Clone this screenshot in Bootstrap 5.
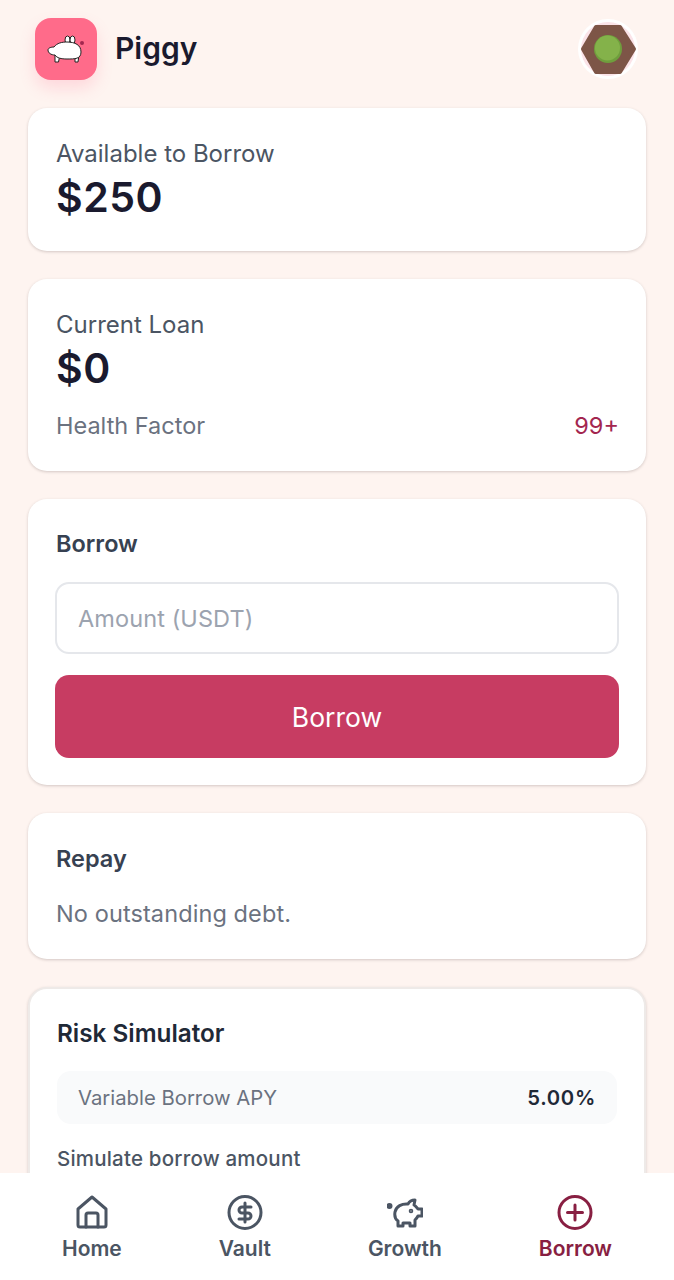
<!DOCTYPE html>
<html lang="en">
<head>
    <meta charset="UTF-8">
    <meta name="viewport" content="width=device-width, initial-scale=1.0">
    <title>Piggy</title>
    <link href="https://cdn.jsdelivr.net/npm/bootstrap@5.3.0/dist/css/bootstrap.min.css" rel="stylesheet">
    <style>
        html, body { height: 100%; }
        body { background: #fef4f0; font-family: Inter, "Liberation Sans", sans-serif; overflow: hidden; color: #1a1a2e; }
        .app-page { height: 1280px; overflow: hidden; padding: 0 28px; }
        .app-head { height: 108px; padding: 0 8px 10px 7px; }
        .logo-box { width: 62px; height: 62px; border-radius: 16px; background: #ff6b8a; box-shadow: 0 8px 16px rgba(255, 107, 138, .2); }
        .brand-gap { gap: 18px; }
        .brand-name { font-size: 30px; font-weight: 600; line-height: 1; color: #1a1a2e; margin-top: -3px; }
        .info-card { border: 0; border-radius: 19px; background: #fff; box-shadow: 0 1px 3px rgba(60, 40, 40, .22); margin-bottom: 28px; padding: 28px 27px; }
        .card-label { font-size: 24px; line-height: 35px; color: #4b5563; padding-left: 1px; }
        .card-amount { font-size: 41px; line-height: 52px; font-weight: 600; color: #1a1a2e; letter-spacing: .5px; padding-left: 1px; }
        .health-row { margin-top: 15px; font-size: 23.5px; line-height: 34px; color: #6b7280; padding-left: 1px; }
        .health-val { color: #a3264f; }
        .section-title { font-size: 23.5px; line-height: 34px; font-weight: 600; color: #374151; padding-left: 1px; }
        .amount-input.form-control { height: 72px; margin-top: 21px; border: 2px solid #e5e7eb; border-radius: 14px; padding: 0 21px; font-size: 23.5px; letter-spacing: .1px; color: #1a1a2e; }
        .amount-input.form-control::placeholder { color: #9ca3af; }
        .borrow-btn.btn { display: block; width: 100%; height: 83px; margin: 21px 0 -1px; padding-top: 9px; border: 0; border-radius: 14px; background: #c73c62; color: #fff; font-size: 26.5px; }
        .repay-card { padding-top: 29px; }
        .repay-note { margin-top: 21px; font-size: 23.5px; line-height: 34px; letter-spacing: .1px; color: #6b7280; padding-left: 1px; }
        .risk-card { border: 2px solid #eeeae8; padding: 27px 27px 0; height: 300px; margin-bottom: 0; }
        .risk-title { font-size: 24.3px; line-height: 34px; font-weight: 600; color: #1f2937; }
        .apy-row { height: 53px; margin-top: 21px; padding: 2px 21px 0; border-radius: 14px; background: #f9fafb; font-size: 20.3px; color: #6b7280; }
        .apy-val { font-weight: 600; color: #1f2937; letter-spacing: .7px; }
        .sim-label { margin-top: 20px; font-size: 20.5px; line-height: 30px; font-weight: 500; letter-spacing: .2px; color: #4b5563; }
        .tab-bar { height: 107px; background: #fff; z-index: 10; padding: 0 62px; }
        .tab-item { padding-top: 22px; color: #4b5563; font-size: 21px; font-weight: 600; line-height: 28px; text-decoration: none; }
        .tab-item svg { display: block; width: 36px; height: 36px; margin-bottom: 4px; }
        .tab-item.tab-on { color: #881f42; }
    </style>
</head>
<body>
    <div class="app-page">
        <header class="app-head d-flex align-items-center justify-content-between">
            <div class="d-flex align-items-center brand-gap">
                <div class="logo-box d-flex align-items-center justify-content-center">
                    <svg width="38" height="28" viewBox="0 0 38 28">
                        <path d="M8 20v7h3.500l1-5zM28 21v6h3l1-7z" fill="#fff" stroke="#222"/>
                        <ellipse cx="20.500" cy="5" rx="2.500" ry="4" fill="#fff" stroke="#222"/>
                        <ellipse cx="25.500" cy="5" rx="2.500" ry="4" fill="#fff" stroke="#222"/>
                        <path d="M1 15c0-2 3-3 6-3 3-4 8-5 13-5 8 0 14 3 14 10s-6 7-14 7c-6 0-10-1-12-4-4 0-7-2-7-5z" fill="#fff" stroke="#222"/>
                        <circle cx="35" cy="8" r="2" fill="#a3264f"/>
                    </svg>
                </div>
                <div class="brand-name">Piggy</div>
            </div>
            <svg width="60" height="60" viewBox="0 0 60 60">
                <circle cx="30" cy="30" r="30" fill="#fff"/>
                <circle cx="30" cy="30" r="27" fill="#fbe3e8"/>
                <path d="M18 8H42L56 30 42 53H18L5 30Z" fill="#7d5547" stroke="#7d5547" stroke-linejoin="round" stroke-width="4"/>
                <circle cx="30" cy="30" r="14" fill="#6f9e3d"/>
                <circle cx="29.500" cy="29" r="12.500" fill="#84b24a"/>
            </svg>
        </header>

        <section class="info-card">
            <div class="card-label">Available to Borrow</div>
            <div class="card-amount">$250</div>
        </section>

        <section class="info-card">
            <div class="card-label">Current Loan</div>
            <div class="card-amount">$0</div>
            <div class="health-row d-flex justify-content-between">
                <span>Health Factor</span>
                <span class="health-val">99+</span>
            </div>
        </section>

        <section class="info-card">
            <div class="section-title">Borrow</div>
            <input type="text" class="form-control amount-input" placeholder="Amount (USDT)">
            <button type="button" class="btn borrow-btn">Borrow</button>
        </section>

        <section class="info-card repay-card">
            <div class="section-title">Repay</div>
            <div class="repay-note">No outstanding debt.</div>
        </section>

        <section class="info-card risk-card">
            <div class="risk-title">Risk Simulator</div>
            <div class="apy-row d-flex align-items-center justify-content-between">
                <span>Variable Borrow APY</span>
                <span class="apy-val">5.00%</span>
            </div>
            <div class="sim-label">Simulate borrow amount</div>
        </section>
    </div>

    <nav class="tab-bar fixed-bottom d-flex justify-content-between">
        <a href="#" class="tab-item d-flex flex-column align-items-center">
            <svg viewBox="0 0 36 36" fill="none" stroke="currentColor" stroke-width="3" stroke-linejoin="round" stroke-linecap="round">
                <path d="M18 2 32 14V30a2 2 0 0 1-2 2H6a2 2 0 0 1-2-2V14Z"/>
                <path d="M12 32V20a2 2 0 0 1 2-2h8a2 2 0 0 1 2 2V32"/>
            </svg>
            Home
        </a>
        <a href="#" class="tab-item d-flex flex-column align-items-center">
            <svg viewBox="0 0 36 36" fill="none" stroke="currentColor" stroke-width="3" stroke-linecap="round" stroke-linejoin="round">
                <circle cx="18" cy="17.500" r="16"/>
                <path d="M18 8V27M24 12H15a3 3 0 0 0 0 6H21a3 3 0 0 1 0 6H12"/>
            </svg>
            Vault
        </a>
        <a href="#" class="tab-item d-flex flex-column align-items-center">
            <svg viewBox="0 0 36 36" fill="none" stroke="currentColor" stroke-width="3" stroke-linecap="round" stroke-linejoin="round">
                <path d="M8 17C9 11 15 8.500 21 9 22 7 25 5 28 5L27 10C29 11 30 13 31 14L35 14 35 21 31 21C30 23 29 24 28 25L28 31 23 31 23 28 16 28 16 31 11 31 11 26C8 24 7.500 20 8 17Z"/>
                <circle cx="2.500" cy="11" r="1.500" fill="currentColor"/>
                <circle cx="24" cy="16" r=".8" fill="currentColor"/>
            </svg>
            Growth
        </a>
        <a href="#" class="tab-item tab-on d-flex flex-column align-items-center">
            <svg viewBox="0 0 36 36" fill="none" stroke="currentColor" stroke-width="3" stroke-linecap="round">
                <circle cx="18" cy="17.500" r="16"/>
                <path d="M18 10V25M10.500 17.500H25.500"/>
            </svg>
            Borrow
        </a>
    </nav>

    <script src="https://cdn.jsdelivr.net/npm/bootstrap@5.3.0/dist/js/bootstrap.bundle.min.js"></script>
</body>
</html>
